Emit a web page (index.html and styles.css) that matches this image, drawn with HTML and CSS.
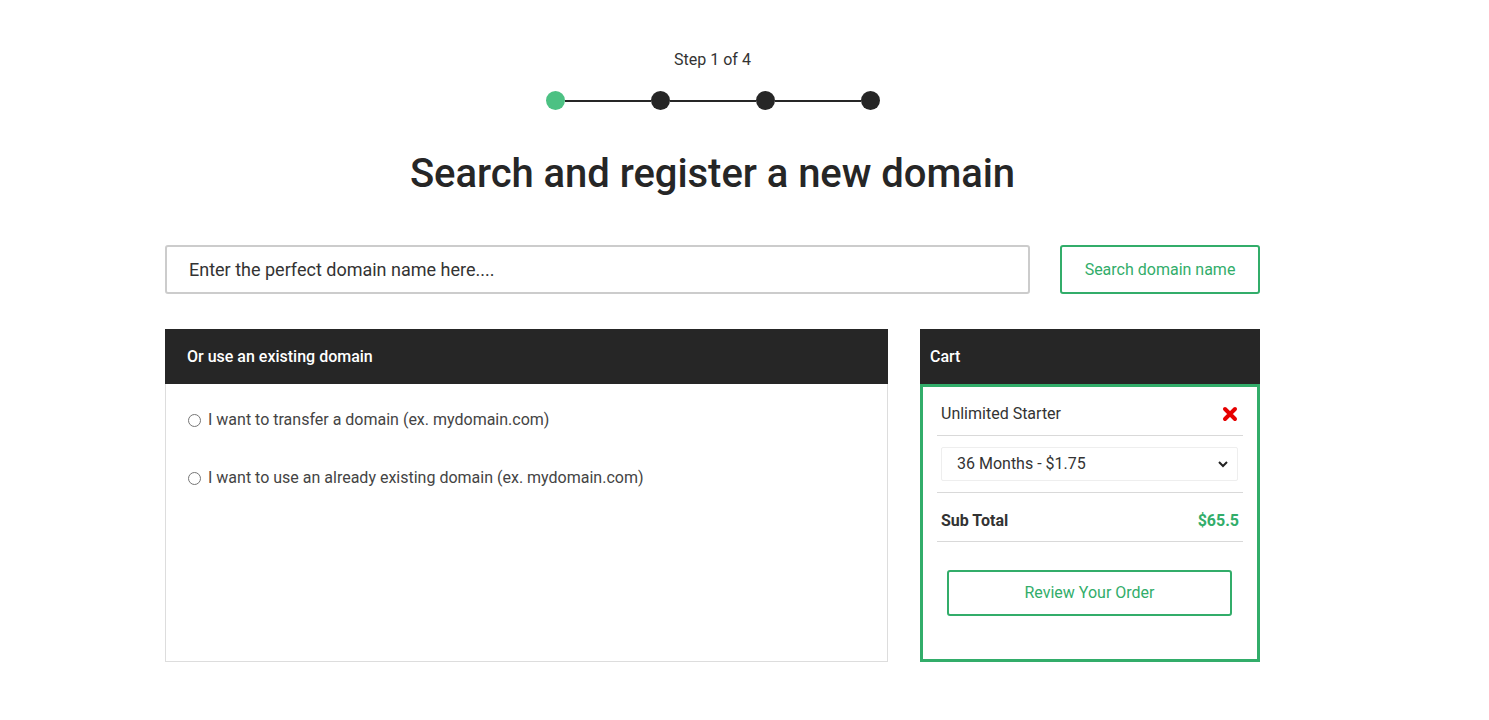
FILE: index.html
```html
<!DOCTYPE html>
<html lang="en">
<head>
<meta charset="utf-8">
<title>Search and register a new domain</title>
<link rel="stylesheet" href="styles.css">
</head>
<body>
<div class="page">
  <div class="step-label">Step 1 of 4</div>
  <div class="stepper">
    <span class="dot active"></span><span class="bar"></span>
    <span class="dot"></span><span class="bar"></span>
    <span class="dot"></span><span class="bar"></span>
    <span class="dot"></span>
  </div>
  <h1 class="title">Search and register a new domain</h1>

  <div class="search-row">
    <div class="search-input">Enter the perfect domain name here....</div>
    <button class="search-btn">Search domain name</button>
  </div>

  <div class="panels">
    <div class="panel left">
      <div class="panel-head">Or use an existing domain</div>
      <div class="panel-body">
        <label class="opt"><span class="radio"></span>I want to transfer a domain (ex. mydomain.com)</label>
        <label class="opt"><span class="radio"></span>I want to use an already existing domain (ex. mydomain.com)</label>
      </div>
    </div>
    <div class="panel cart">
      <div class="panel-head cart-head">Cart</div>
      <div class="cart-body">
        <div class="cart-row item">
          <span>Unlimited Starter</span>
          <svg class="remove" width="16" height="16" viewBox="0 0 16 16"><path d="M3 3 L13 13 M13 3 L3 13" stroke="#e60000" stroke-width="4" stroke-linecap="round"/></svg>
        </div>
        <div class="cart-row sel">
          <div class="select">
            <span>36 Months - $1.75</span>
            <svg width="12" height="8" viewBox="0 0 12 8"><path d="M2 2 L6 6 L10 2" fill="none" stroke="#222" stroke-width="2"/></svg>
          </div>
        </div>
        <div class="cart-row total">
          <span>Sub Total</span>
          <span class="price">$65.5</span>
        </div>
        <button class="review-btn">Review Your Order</button>
      </div>
    </div>
  </div>
</div>
</body>
</html>
```

FILE: styles.css
```css
* { box-sizing: border-box; }
body {
  margin: 0;
  background: #fff;
  font-family: Roboto, "Liberation Sans", Arial, sans-serif;
  color: #333;
}
.page {
  width: 1095px;
  margin: 0 0 0 165px;
  padding-top: 50px;
  display: flex;
  flex-direction: column;
  align-items: center;
}
.step-label {
  font-size: 16px;
  line-height: 20px;
  color: #333;
}
.stepper {
  display: flex;
  align-items: center;
  margin-top: 21px;
}
.dot {
  width: 19px;
  height: 19px;
  border-radius: 50%;
  background: #262626;
  display: block;
}
.dot.active { background: #4cc183; }
.bar {
  width: 86px;
  height: 2px;
  background: #262626;
  display: block;
}
.title {
  margin: 40px 0 0;
  font-size: 40px;
  line-height: 48px;
  font-weight: 500;
  color: #262626;
  letter-spacing: -0.05px;
}
.search-row {
  margin-top: 47px;
  width: 100%;
  display: flex;
  gap: 30px;
}
.search-input {
  width: 865px;
  height: 49px;
  border: 2px solid #cccccc;
  border-radius: 3px;
  padding: 0 22px;
  display: flex;
  align-items: center;
  font-size: 18px;
  color: #333;
}
.search-btn {
  width: 200px;
  height: 49px;
  background: #fff;
  border: 2px solid #32ad6a;
  border-radius: 3px;
  color: #32ad6a;
  font-family: inherit;
  font-size: 16px;
  padding: 0 0 1px;
}
.panels {
  margin-top: 35px;
  width: 100%;
  display: flex;
  gap: 32px;
  align-items: stretch;
}
.panel { display: flex; flex-direction: column; }
.panel.left { width: 723px; }
.panel.cart { width: 340px; }
.panel-head {
  height: 55px;
  background: #262626;
  color: #fff;
  font-size: 16px;
  font-weight: 500;
  display: flex;
  align-items: center;
  padding-left: 22px;
  padding-bottom: 1px;
}
.cart-head { padding-left: 10px; }
.panel-body {
  flex: 1;
  border: 1px solid #dddddd;
  border-top: none;
  padding: 26px 22px 0;
  display: flex;
  flex-direction: column;
  gap: 38px;
}
.opt {
  display: flex;
  align-items: center;
  font-size: 16px;
  line-height: 20px;
  color: #444;
}
.radio {
  width: 13px;
  height: 13px;
  border: 1px solid #767676;
  border-radius: 50%;
  margin-right: 7px;
  margin-left: 0;
  display: block;
}
.cart-body {
  height: 278px;
  border: 3px solid #32ad6a;
  padding: 0 14px;
  display: flex;
  flex-direction: column;
}
.cart-row {
  border-bottom: 1px solid #d9d9d9;
  display: flex;
  align-items: center;
  justify-content: space-between;
}
.cart-row.item {
  padding: 17px 5px 11px 4px;
  font-size: 16px;
  line-height: 20px;
  color: #333;
}
.remove { display: block; }
.cart-row.sel { padding: 11px 5px 11px 4px; }
.select {
  width: 100%;
  height: 34px;
  border: 1px solid #eeeeee;
  border-radius: 2px;
  display: flex;
  align-items: center;
  justify-content: space-between;
  padding: 0 8px 1px 15px;
  font-size: 16px;
  color: #333;
}
.select svg { display: block; }
.cart-row.total {
  padding: 18px 4px 10px;
  font-size: 16px;
  line-height: 20px;
  font-weight: 700;
  color: #333;
}
.price { color: #32ad6a; }
.review-btn {
  margin: 28px 11px 0 10px;
  height: 46px;
  background: #fff;
  border: 2px solid #32ad6a;
  border-radius: 3px;
  color: #32ad6a;
  font-family: inherit;
  font-size: 16px;
  padding: 0 0 2px;
}
```
